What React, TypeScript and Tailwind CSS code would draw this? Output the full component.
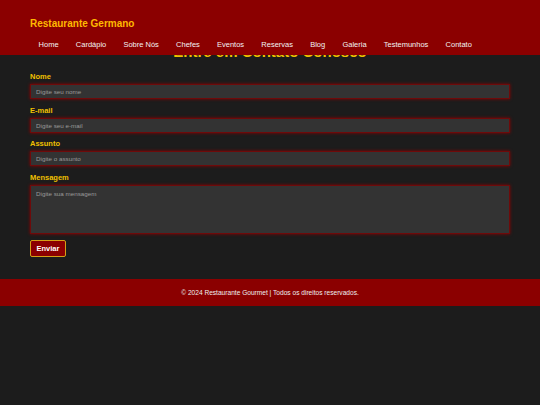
const links = ["Home", "Cardápio", "Sobre Nós", "Chefes", "Eventos", "Reservas", "Blog", "Galeria", "Testemunhos", "Contato"];

function Field({ label, placeholder }: { label: string; placeholder: string }) {
  return (
    <div className="mb-[6.7px]">
      <label className="block text-[7.5px] leading-[10px] font-bold text-[#f0c000] mb-[2px]">{label}</label>
      <input
        placeholder={placeholder}
        className="block w-full h-[15px] px-[5px] bg-[#333333] border border-[#6e0a0a] shadow-[0_0_3px_#8b0000] text-[6.25px] text-[#ddd] placeholder:text-[#9a9a9a] outline-none"
      />
    </div>
  );
}

export default function App() {
  return (
    <div className="min-h-screen bg-[#1c1c1c]" style={{ fontFamily: '"Liberation Sans", Arial, sans-serif' }}>
      {/* Fixed header overlaps the page title */}
      <header className="fixed top-0 left-0 right-0 z-10 h-[55px] bg-[#8b0000] px-[30px] pt-[18px]">
        <h1 className="text-[10px] leading-[12px] font-bold text-[#ffb800]">Restaurante Germano</h1>
        <nav className="flex mt-[10px]">
          {links.map((l) => (
            <a key={l} className="px-[8.6px] text-[7.5px] leading-[10px] text-[#f2f2f2]">
              {l}
            </a>
          ))}
        </nav>
      </header>

      <main className="px-[30px] pt-[43px]">
        <h2 className="text-center text-[15px] leading-[18px] font-bold text-[#f0c000]">Entre em Contato Conosco</h2>
        <form className="mt-[11px] flex flex-col">
          <Field label="Nome" placeholder="Digite seu nome" />
          <Field label="E-mail" placeholder="Digite seu e-mail" />
          <Field label="Assunto" placeholder="Digite o assunto" />
          <div className="mb-[6.3px]">
            <label className="block text-[7.5px] leading-[10px] font-bold text-[#f0c000] mb-[2px]">Mensagem</label>
            <textarea
              placeholder="Digite sua mensagem"
              className="block w-full h-[49px] px-[5px] py-[3px] resize-none bg-[#333333] border border-[#6e0a0a] shadow-[0_0_3px_#8b0000] text-[6.25px] text-[#ddd] placeholder:text-[#9a9a9a] outline-none"
            />
          </div>
          <button
            type="button"
            className="self-start h-[17px] px-[5.5px] rounded-[2px] bg-[#8b0000] border border-[#d4a017] text-[7.5px] leading-[10px] font-bold text-white"
          >
            Enviar
          </button>
        </form>
      </main>

      <footer className="mt-[22px] h-[27px] bg-[#8b0000] flex items-center justify-center">
        <p className="text-[6.6px] text-[#eeeeee]">© 2024 Restaurante Gourmet | Todos os direitos reservados.</p>
      </footer>
    </div>
  );
}
